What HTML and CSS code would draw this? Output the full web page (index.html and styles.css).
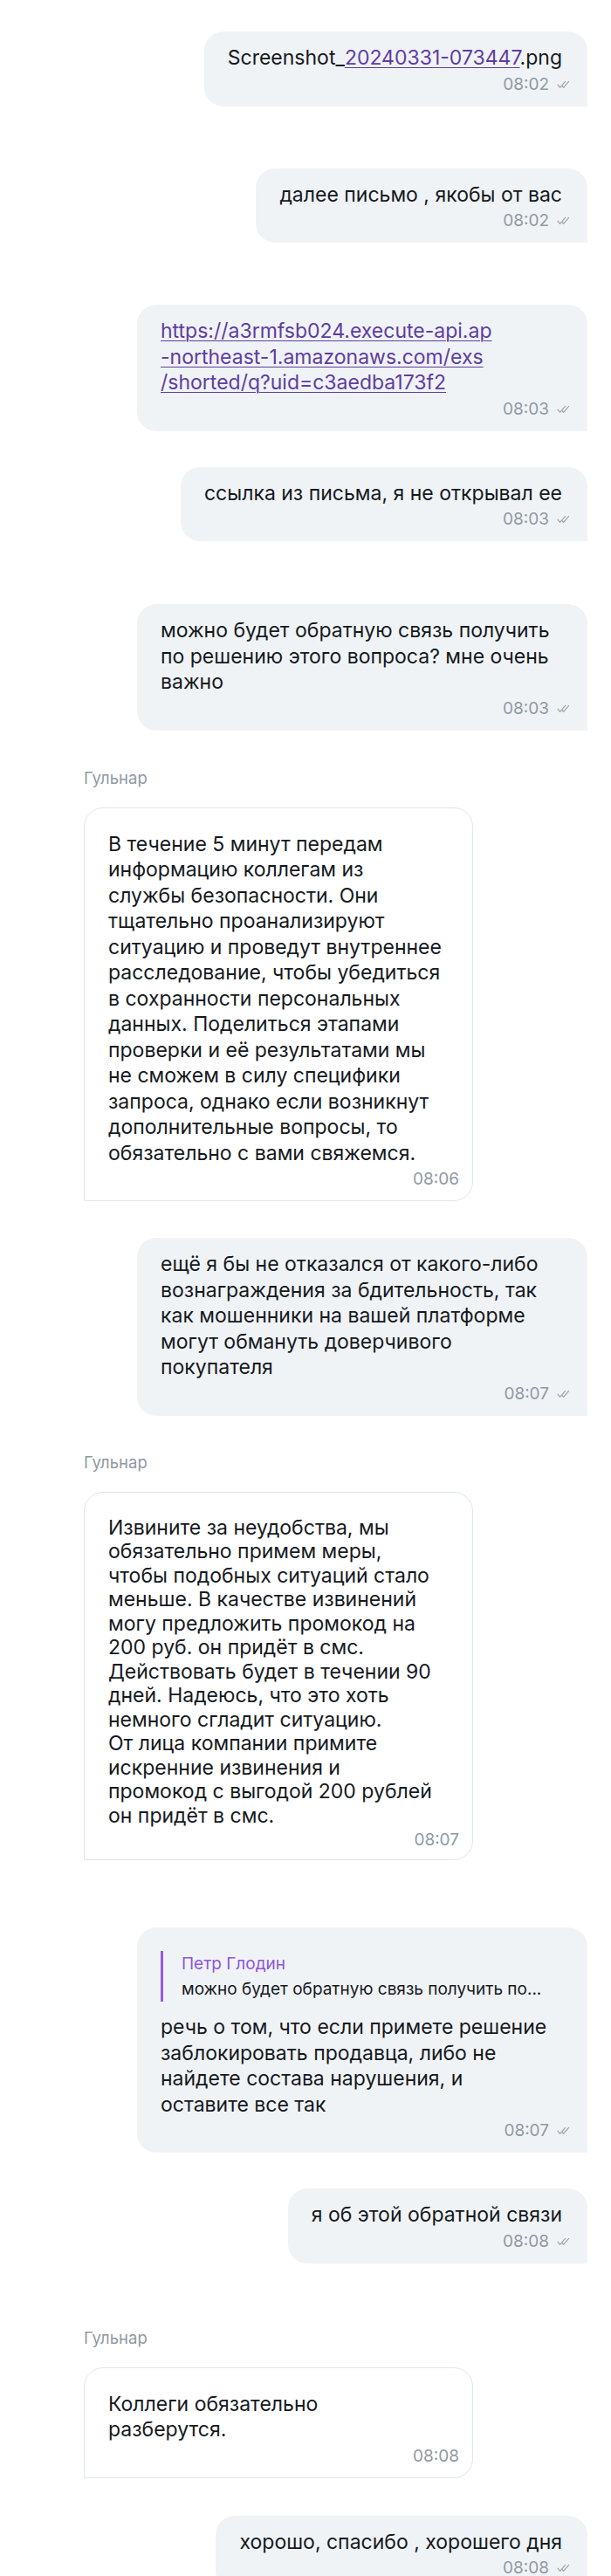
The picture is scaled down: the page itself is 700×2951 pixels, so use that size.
FILE: index.html
```html
<!DOCTYPE html>
<html lang="ru">
<head>
<meta charset="utf-8">
<title>Чат</title>
<link rel="stylesheet" href="styles.css">
</head>
<body>
<div class="chat">

  <div class="bubble out">
    <div class="text">Screenshot_<a class="link" href="#">20240331-073447</a>.png</div>
    <div class="meta"><span class="time">08:02</span><svg class="check" viewBox="0 0 16 10" width="16" height="10"><path d="M1 5.2 L3.6 8.4 L9.6 1.4 M6.4 7 L7.6 8.4 L13.6 1.4"/></svg></div>
  </div>

  <div class="bubble out g71">
    <div class="text">далее письмо , якобы от вас</div>
    <div class="meta"><span class="time">08:02</span><svg class="check" viewBox="0 0 16 10" width="16" height="10"><path d="M1 5.2 L3.6 8.4 L9.6 1.4 M6.4 7 L7.6 8.4 L13.6 1.4"/></svg></div>
  </div>

  <div class="bubble out full g71">
    <div class="text"><a class="link" href="#">https://a3rmfsb024.execute-api.ap<br>-northeast-1.amazonaws.com/exs<br>/shorted/q?uid=c3aedba173f2</a></div>
    <div class="meta"><span class="time">08:03</span><svg class="check" viewBox="0 0 16 10" width="16" height="10"><path d="M1 5.2 L3.6 8.4 L9.6 1.4 M6.4 7 L7.6 8.4 L13.6 1.4"/></svg></div>
  </div>

  <div class="bubble out g41">
    <div class="text">ссылка из письма, я не открывал ее</div>
    <div class="meta"><span class="time">08:03</span><svg class="check" viewBox="0 0 16 10" width="16" height="10"><path d="M1 5.2 L3.6 8.4 L9.6 1.4 M6.4 7 L7.6 8.4 L13.6 1.4"/></svg></div>
  </div>

  <div class="bubble out full g72">
    <div class="text">можно будет обратную связь получить<br>по решению этого вопроса? мне очень<br>важно</div>
    <div class="meta"><span class="time">08:03</span><svg class="check" viewBox="0 0 16 10" width="16" height="10"><path d="M1 5.2 L3.6 8.4 L9.6 1.4 M6.4 7 L7.6 8.4 L13.6 1.4"/></svg></div>
  </div>

  <div class="author g42">Гульнар</div>
  <div class="bubble in">
    <div class="text">В течение 5 минут передам<br>информацию коллегам из<br>службы безопасности. Они<br>тщательно проанализируют<br>ситуацию и проведут внутреннее<br>расследование, чтобы убедиться<br>в сохранности персональных<br>данных. Поделиться этапами<br>проверки и её результатами мы<br>не сможем в силу специфики<br>запроса, однако если возникнут<br>дополнительные вопросы, то<br>обязательно с вами свяжемся.</div>
    <div class="meta"><span class="time">08:06</span></div>
  </div>

  <div class="bubble out full g42">
    <div class="text">ещё я бы не отказался от какого-либо<br>вознаграждения за бдительность, так<br>как мошенники на вашей платформе<br>могут обмануть доверчивого<br>покупателя</div>
    <div class="meta"><span class="time">08:07</span><svg class="check" viewBox="0 0 16 10" width="16" height="10"><path d="M1 5.2 L3.6 8.4 L9.6 1.4 M6.4 7 L7.6 8.4 L13.6 1.4"/></svg></div>
  </div>

  <div class="author g41">Гульнар</div>
  <div class="bubble in tight">
    <div class="text">Извините за неудобства, мы<br>обязательно примем меры,<br>чтобы подобных ситуаций стало<br>меньше. В качестве извинений<br>могу предложить промокод на<br>200 руб. он придёт в смс.<br>Действовать будет в течении 90<br>дней. Надеюсь, что это хоть<br>немного сгладит ситуацию.<br>От лица компании примите<br>искренние извинения и<br>промокод с выгодой 200 рублей<br>он придёт в смс.</div>
    <div class="meta"><span class="time">08:07</span></div>
  </div>

  <div class="bubble out full g77">
    <div class="quote">
      <div class="quote-name">Петр Глодин</div>
      <div class="quote-text">можно будет обратную связь получить по...</div>
    </div>
    <div class="text">речь о том, что если примете решение<br>заблокировать продавца, либо не<br>найдете состава нарушения, и<br>оставите все так</div>
    <div class="meta"><span class="time">08:07</span><svg class="check" viewBox="0 0 16 10" width="16" height="10"><path d="M1 5.2 L3.6 8.4 L9.6 1.4 M6.4 7 L7.6 8.4 L13.6 1.4"/></svg></div>
  </div>

  <div class="bubble out g41">
    <div class="text">я об этой обратной связи</div>
    <div class="meta"><span class="time">08:08</span><svg class="check" viewBox="0 0 16 10" width="16" height="10"><path d="M1 5.2 L3.6 8.4 L9.6 1.4 M6.4 7 L7.6 8.4 L13.6 1.4"/></svg></div>
  </div>

  <div class="author g73">Гульнар</div>
  <div class="bubble in">
    <div class="text">Коллеги обязательно<br>разберутся.</div>
    <div class="meta"><span class="time">08:08</span></div>
  </div>

  <div class="bubble out g43">
    <div class="text">хорошо, спасибо , хорошего дня</div>
    <div class="meta"><span class="time">08:08</span><svg class="check" viewBox="0 0 16 10" width="16" height="10"><path d="M1 5.2 L3.6 8.4 L9.6 1.4 M6.4 7 L7.6 8.4 L13.6 1.4"/></svg></div>
  </div>

</div>
</body>
</html>
```

FILE: styles.css
```css
html, body {
  margin: 0;
  padding: 0;
  background: #ffffff;
}

body {
  font-family: Inter, "Noto Sans", "DejaVu Sans", sans-serif;
  color: #15191e;
}

.chat {
  display: flex;
  flex-direction: column;
  padding: 36px 27px 60px 96px;
}

.bubble {
  box-sizing: border-box;
  font-size: 23px;
  line-height: 29.5px;
}

.text {
  white-space: nowrap;
}

.out {
  align-self: flex-end;
  max-width: 516px;
  background: #f0f3f6;
  border-radius: 22px 22px 0 22px;
  padding: 16px 29px 10px 27px;
}

.out.full {
  width: 516px;
}

.in {
  align-self: flex-start;
  width: 446px;
  background: #ffffff;
  border: 1px solid #dfe6ed;
  border-radius: 22px 22px 22px 0;
  padding: 27px 27px 9px 27px;
}

.in.tight {
  line-height: 27.5px;
}

.in.tight .meta {
  line-height: 27px;
}

.g41 { margin-top: 41px; }
.g42 { margin-top: 42px; }
.g43 { margin-top: 43px; }
.g71 { margin-top: 71px; }
.g72 { margin-top: 72px; }
.g73 { margin-top: 73px; }
.g77 { margin-top: 77px; }

.link {
  color: #5f3da0;
  text-decoration: underline;
  text-decoration-thickness: 1px;
  text-underline-offset: 3px;
}

.meta {
  display: flex;
  justify-content: flex-end;
  align-items: center;
  gap: 9px;
  margin-right: -10px;
  font-size: 19px;
  line-height: 30px;
  color: #8f99a4;
}

.in .meta {
  margin-right: -12px;
}

.check {
  display: block;
  fill: none;
  stroke: #9aa3ad;
  stroke-width: 1.2;
  stroke-linecap: round;
  stroke-linejoin: round;
}

.author {
  align-self: flex-start;
  font-size: 18.5px;
  line-height: 24px;
  color: #8f99a4;
  margin-bottom: 22px;
}

.quote {
  margin: 11px 0 15px;
  border-left: 3px solid #9b57e6;
  padding-left: 21px;
  font-size: 19px;
  line-height: 29px;
}

.quote-name {
  color: #8e55df;
}

.quote-text {
  white-space: nowrap;
  overflow: hidden;
  text-overflow: ellipsis;
}
```
